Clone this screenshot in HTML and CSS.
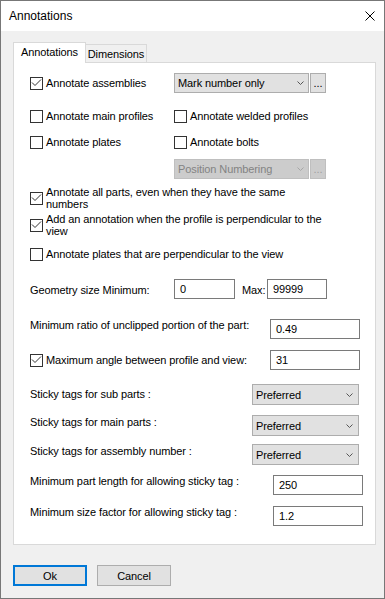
FILE: index.html
```html
<!DOCTYPE html>
<html lang="en">
<head>
  <meta charset="UTF-8" />
  <meta name="viewport" content="width=device-width, initial-scale=1.0" />
  <title>Annotations</title>
  <link rel="stylesheet" href="styles.css">
</head>
<body>
  <div class="dialog">
    <div class="titleBar">
      <span class="title">Annotations</span>
      <svg class="closeIcon" width="10" height="10" viewBox="0 0 10 10"><path d="M0.5 0.5L9.5 9.5M9.5 0.5L0.5 9.5" stroke="#000" stroke-width="1" fill="none"/></svg>
    </div>
    <div class="client">
      <div class="tabs">
        <div class="tab active">Annotations</div>
        <div class="tab">Dimensions</div>
      </div>
      <div class="panel">
        <div class="row rowAssemblies">
          <div class="check col1"><span class="box"><svg width="11" height="11" viewBox="0 0 11 11"><polyline points="1,4.5 4,7.5 10,1.5" fill="none" stroke="#333" stroke-width="1"/></svg></span>Annotate assemblies</div>
          <div class="combo wide"><span>Mark number only</span><svg width="7" height="4" viewBox="0 0 7 4"><polyline points="0.5,0.5 3.5,3.5 6.5,0.5" fill="none" stroke="#555" stroke-width="1"/></svg></div>
          <div class="dots">...</div>
        </div>
        <div class="row rowMain">
          <div class="check col1"><span class="box"></span>Annotate main profiles</div>
          <div class="check"><span class="box"></span>Annotate welded profiles</div>
        </div>
        <div class="row rowPlates">
          <div class="check col1"><span class="box"></span>Annotate plates</div>
          <div class="check"><span class="box"></span>Annotate bolts</div>
        </div>
        <div class="row rowNumbering">
          <div class="combo wide disabled"><span>Position Numbering</span><svg width="7" height="4" viewBox="0 0 7 4"><polyline points="0.5,0.5 3.5,3.5 6.5,0.5" fill="none" stroke="#a6a6a6" stroke-width="1"/></svg></div>
          <div class="dots disabled">...</div>
        </div>
        <div class="row rowAllParts">
          <div class="check multi"><span class="box"><svg width="11" height="11" viewBox="0 0 11 11"><polyline points="1,4.5 4,7.5 10,1.5" fill="none" stroke="#333" stroke-width="1"/></svg></span><span>Annotate all parts, even when they have the same<br>numbers</span></div>
        </div>
        <div class="row rowPerp">
          <div class="check multi"><span class="box"><svg width="11" height="11" viewBox="0 0 11 11"><polyline points="1,4.5 4,7.5 10,1.5" fill="none" stroke="#333" stroke-width="1"/></svg></span><span>Add an annotation when the profile is perpendicular to the<br>view</span></div>
        </div>
        <div class="row rowPlatesPerp">
          <div class="check"><span class="box"></span>Annotate plates that are perpendicular to the view</div>
        </div>

        <div class="row rowGeometry top">
          <div class="label col1 off5">Geometry size Minimum:</div>
          <div class="field minField">0</div>
          <div class="label maxLabel off5">Max:</div>
          <div class="field maxField">99999</div>
        </div>
        <div class="row rowRatio top">
          <div class="label w240">Minimum ratio of unclipped portion of the part:</div>
          <div class="field w90">0.49</div>
        </div>
        <div class="row rowAngle">
          <div class="check w240"><span class="box"><svg width="11" height="11" viewBox="0 0 11 11"><polyline points="1,4.5 4,7.5 10,1.5" fill="none" stroke="#333" stroke-width="1"/></svg></span>Maximum angle between profile and view:</div>
          <div class="field w90">31</div>
        </div>

        <div class="row rowSub top">
          <div class="label w222 off4">Sticky tags for sub parts :</div>
          <div class="combo sticky"><span>Preferred</span><svg width="7" height="4" viewBox="0 0 7 4"><polyline points="0.5,0.5 3.5,3.5 6.5,0.5" fill="none" stroke="#555" stroke-width="1"/></svg></div>
        </div>
        <div class="row rowMainParts top">
          <div class="label w222 off1">Sticky tags for main parts :</div>
          <div class="combo sticky"><span>Preferred</span><svg width="7" height="4" viewBox="0 0 7 4"><polyline points="0.5,0.5 3.5,3.5 6.5,0.5" fill="none" stroke="#555" stroke-width="1"/></svg></div>
        </div>
        <div class="row rowAssembly top">
          <div class="label w222 off1">Sticky tags for assembly number :</div>
          <div class="combo sticky"><span>Preferred</span><svg width="7" height="4" viewBox="0 0 7 4"><polyline points="0.5,0.5 3.5,3.5 6.5,0.5" fill="none" stroke="#555" stroke-width="1"/></svg></div>
        </div>
        <div class="row rowLength top">
          <div class="label w243">Minimum part length for allowing sticky tag :</div>
          <div class="field w90">250</div>
        </div>
        <div class="row rowFactor top">
          <div class="label w243">Minimum size factor for allowing sticky tag :</div>
          <div class="field w90">1.2</div>
        </div>
      </div>
      <div class="buttons">
        <div class="btn default">Ok</div>
        <div class="btn">Cancel</div>
      </div>
    </div>
  </div>
</body>
</html>
```

FILE: styles.css
```css
* {
  margin: 0;
  padding: 0;
  box-sizing: border-box;
}
body {
  font-family: "Liberation Sans", Arial, sans-serif;
  font-size: 11px;
  letter-spacing: -0.1px;
  color: #000;
  background: #f0f0f0;
}
.dialog {
  width: 385px;
  height: 599px;
  border: 1px solid #777;
  background: #f0f0f0;
}
.titleBar {
  height: 30px;
  background: #fff;
  display: flex;
  align-items: center;
  justify-content: space-between;
  padding: 0 9px 0 8px;
}
.title {
  font-size: 12px;
  letter-spacing: 0;
}
.client {
  padding: 11px 0 0 12px;
}
.tabs {
  display: flex;
  align-items: flex-end;
  height: 20px;
}
.tab {
  width: 61px;
  height: 18px;
  border: 1px solid #d9d9d9;
  border-left: none;
  border-bottom: none;
  text-align: center;
  line-height: 13px;
  padding-top: 3px;
}
.tab.active {
  width: 73px;
  height: 21px;
  border-left: 1px solid #d9d9d9;
  background: #fff;
  margin-bottom: -1px;
  position: relative;
  z-index: 1;
}
.panel {
  width: 363px;
  height: 483px;
  border: 1px solid #d9d9d9;
  background: #fff;
  padding: 10px 0 0 16px;
}
.row {
  display: flex;
  align-items: center;
}
.row.top {
  align-items: flex-start;
}
.rowAssemblies { height: 20px; }
.rowMain { height: 13px; margin-top: 17px; }
.rowPlates { height: 13px; margin-top: 13px; }
.rowNumbering { height: 20px; margin-top: 10px; padding-left: 144px; }
.rowAllParts { height: 24px; margin-top: 7px; }
.rowPerp { height: 24px; margin-top: 3px; }
.rowPlatesPerp { height: 13px; margin-top: 11px; }
.rowGeometry { height: 20px; margin-top: 18px; }
.rowRatio { height: 20px; margin-top: 20px; }
.rowAngle { height: 20px; margin-top: 11px; }
.rowSub { height: 21px; margin-top: 14px; }
.rowMainParts { height: 21px; margin-top: 10px; }
.rowAssembly { height: 21px; margin-top: 8px; }
.rowLength { height: 20px; margin-top: 10px; }
.rowFactor { height: 20px; margin-top: 11px; }

.check {
  display: flex;
  align-items: center;
  gap: 3px;
  line-height: 13px;
  white-space: nowrap;
}
.check.multi {
  line-height: 12px;
}
.box {
  width: 13px;
  height: 13px;
  border: 1px solid #333;
  background: #fff;
  flex: none;
  display: flex;
}
.label {
  line-height: 13px;
  white-space: nowrap;
  flex: none;
}
.col1 { width: 144px; flex: none; }
.w240 { width: 240px; flex: none; }
.w222 { width: 222px; }
.w243 { width: 243px; }
.w90 { width: 90px; }
.off5 { margin-top: 5px; }
.off4 { margin-top: 4px; }
.off1 { margin-top: 1px; }

.combo {
  display: flex;
  align-items: center;
  justify-content: space-between;
  height: 20px;
  border: 1px solid #adadad;
  background: #e1e1e1;
  padding: 0 4px 0 3px;
  white-space: nowrap;
}
.combo.wide {
  width: 135px;
}
.combo.sticky {
  width: 107px;
  height: 21px;
  padding-right: 5px;
}
.combo.disabled {
  background: #cccccc;
  border-color: #bfbfbf;
  color: #838383;
}
.dots {
  width: 16px;
  height: 20px;
  margin-left: 1px;
  border: 1px solid #adadad;
  background: #e1e1e1;
  text-align: center;
  line-height: 18px;
}
.dots.disabled {
  background: #cccccc;
  border-color: #bfbfbf;
  color: #a0a0a0;
}
.field {
  height: 20px;
  border: 1px solid #7a7a7a;
  background: #fff;
  padding-left: 5px;
  display: flex;
  align-items: center;
  flex: none;
}
.minField { width: 61px; }
.maxLabel { width: 32px; padding-left: 7px; }
.maxField { width: 60px; }

.buttons {
  display: flex;
  gap: 10px;
  margin-top: 20px;
}
.btn {
  width: 74px;
  height: 21px;
  border: 1px solid #adadad;
  background: #e1e1e1;
  display: flex;
  align-items: center;
  justify-content: center;
}
.btn.default {
  border: 2px solid #0078d7;
}
```
